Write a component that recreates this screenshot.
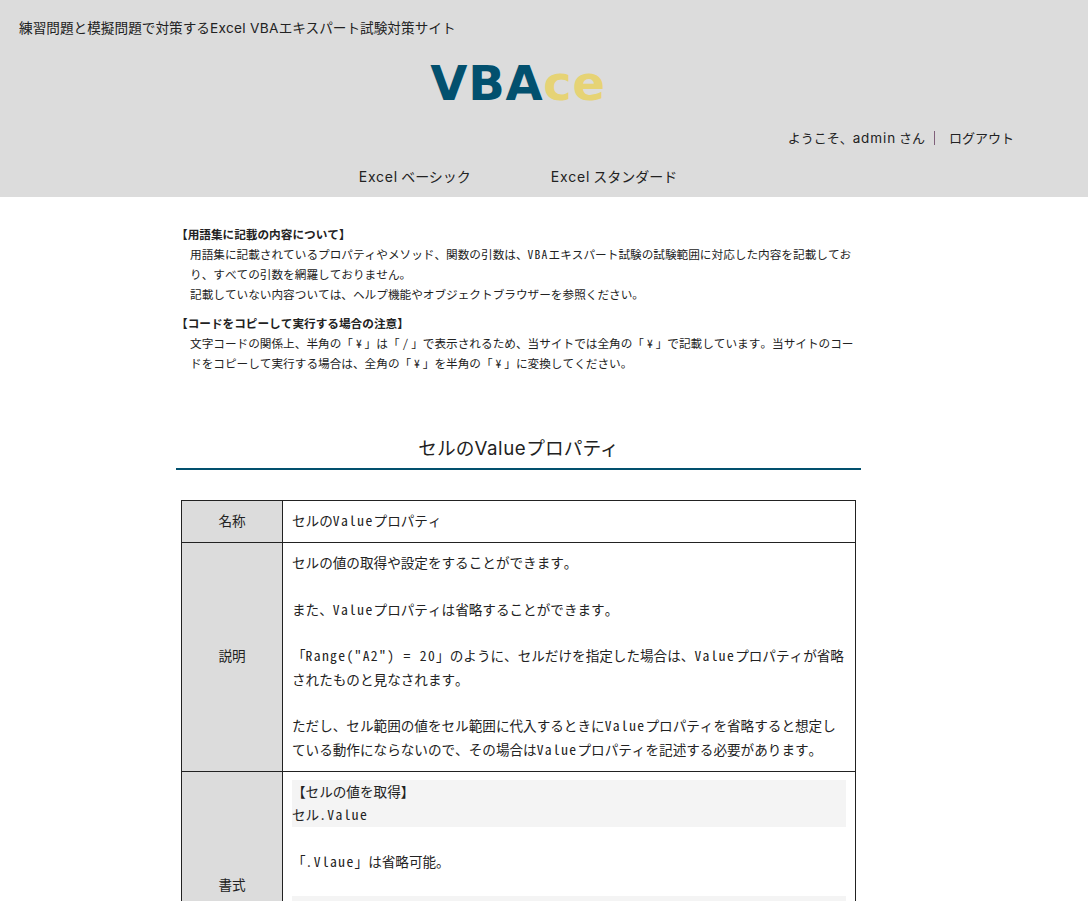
<div class="head">
	<p class="tag">練習問題と模擬問題で対策する<span class="lat">Excel VBA</span>エキスパート試験対策サイト</p>
	<div class="logo">VBA<span>ce</span></div>
	<div class="user">ようこそ、<span class="lat">admin</span>&nbsp;さん<span class="sep"></span><span class="out">ログアウト</span></div>
	<nav><span><span class="lat">Excel</span> ベーシック</span><span><span class="lat">Excel</span> スタンダード</span></nav>
</div>
<div class="main">
	<div class="note">
		<h4>【用語集に記載の内容について】</h4>
		<p>用語集に記載されているプロパティやメソッド、関数の引数は、<span class="m">VBA</span>エキスパート試験の試験範囲に対応した内容を記載しており、すべての引数を網羅しておりません。</p>
		<p>記載していない内容ついては、ヘルプ機能やオブジェクトブラウザーを参照ください。</p>
		<h4 class="second">【コードをコピーして実行する場合の注意】</h4>
		<p>文字コードの関係上、半角の「<span class="w">¥</span>」は「<span class="w">/</span>」で表示されるため、当サイトでは全角の「<span class="w">¥</span>」で記載しています。当サイトのコードをコピーして実行する場合は、全角の「<span class="w">¥</span>」を半角の「<span class="w">¥</span>」に変換してください。</p>
	</div>
	<h2>セルの<span class="lat">Value</span>プロパティ</h2>
	<table>
		<tbody>
			<tr><th>名称</th><td>セルの<span class="m">Value</span>プロパティ</td></tr>
			<tr><th>説明</th><td>セルの値の取得や設定をすることができます。<br><br>また、<span class="m">Value</span>プロパティは省略することができます。<br><br>「<span class="m">Range("A2") = 20</span>」のように、セルだけを指定した場合は、<span class="m">Value</span>プロパティが省略されたものと見なされます。<br><br>ただし、セル範囲の値をセル範囲に代入するときに<span class="m">Value</span>プロパティを省略すると想定している動作にならないので、その場合は<span class="m">Value</span>プロパティを記述する必要があります。</td></tr>
			<tr><th>書式</th><td><div class="code">【セルの値を取得】<br>セル<span class="m">.Value</span></div><br>「<span class="m">.Vlaue</span>」は省略可能。<br><br><div class="code last">【セルの値を設定】<br>セル<span class="m">.Value = </span>値</div></td></tr>
		</tbody>
	</table>
</div>

<style>
	:global(body) {
		margin: 0;
		font-family: "Noto Sans Mono CJK JP", "Noto Sans CJK JP", monospace;
		color: #222;
	}
	.head {
		background: #dcdcdc;
		height: 197px;
		font-family: "Noto Sans CJK JP", sans-serif;
		overflow: hidden;
	}
	.lat {
		font-family: Inter, sans-serif;
		letter-spacing: 0.8px;
	}
	.m {
		letter-spacing: 0.1em;
	}
	.w {
		display: inline-block;
		width: 1em;
		text-align: center;
	}
	.tag {
		margin: 0;
		padding: 18px 0 0 19px;
		font-size: 13.65px;
		line-height: 18px;
	}
	.tag .lat {
		letter-spacing: 0.3px;
	}
	.logo {
		padding-right: 52px;
		text-align: center;
		font-family: "DejaVu Sans", sans-serif;
		font-weight: 700;
		font-size: 48px;
		letter-spacing: 0.7px;
		line-height: 56px;
		margin-top: 18px;
		color: #02506e;
	}
	.logo span {
		color: #e6d375;
	}
	.user {
		display: flex;
		justify-content: flex-end;
		align-items: center;
		padding-right: 74px;
		font-size: 13px;
		line-height: 18px;
		margin-top: 18px;
	}
	.user .lat {
		font-size: 13.5px;
		letter-spacing: 0.9px;
	}
	.sep {
		width: 1px;
		height: 14px;
		background: #80607a;
		margin: 0 14px 0 9px;
	}
	nav {
		display: flex;
		gap: 80px;
		justify-content: center;
		padding-right: 52px;
		font-size: 14px;
		line-height: 20px;
		margin-top: 19px;
	}
	.main {
		width: 685px;
		margin: 0 0 0 176px;
	}
	.note {
		font-size: 11.65px;
		line-height: 20px;
		padding-top: 27px;
		padding-left: 14px;
		padding-right: 4px;
	}
	.note p {
		margin: 0;
	}
	.note h4 {
		margin: 0 0 0 -14px;
		font-size: 11.65px;
	}
	.note h4.second {
		margin-top: 9px;
	}
	h2 {
		font-family: "Noto Sans CJK JP", sans-serif;
		font-weight: 400;
		font-size: 18.7px;
		line-height: 28px;
		text-align: center;
		margin: 60px 0 0;
		padding-bottom: 5px;
		border-bottom: 2px solid #02506e;
	}
	h2 .lat {
		letter-spacing: 0.6px;
	}
	table {
		border-collapse: collapse;
		width: 675px;
		margin: 30px 0 0 5px;
		font-size: 13.6px;
		line-height: 23.3px;
	}
	th, td {
		border: 1px solid #222;
		padding: 8px 9px 10px;
	}
	th {
		width: 82px;
		background: #dcdcdc;
		font-weight: 400;
	}
	.code {
		background: #f4f4f4;
	}
	.code.last {
		margin-bottom: 47px;
	}
</style>
